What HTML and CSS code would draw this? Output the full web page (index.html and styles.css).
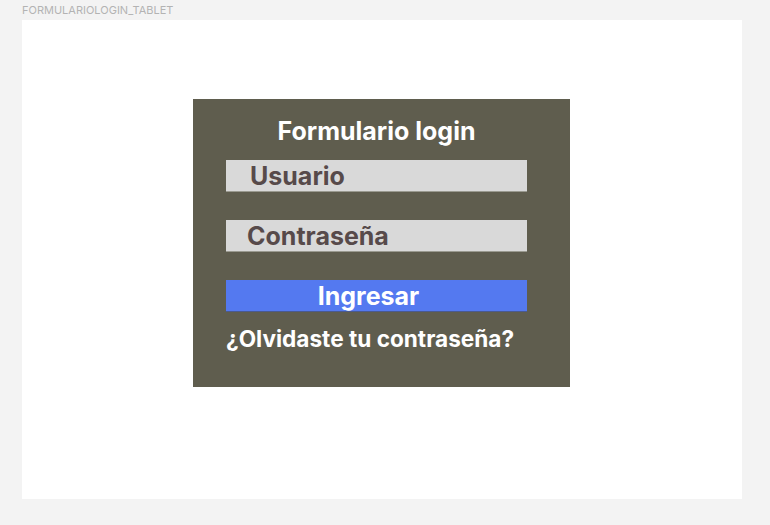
FILE: index.html
```html
<!DOCTYPE html>
<html lang="es">
<head>
<meta charset="utf-8">
<title>FormularioLogin_Tablet</title>
<link rel="stylesheet" href="styles.css">
</head>
<body>
<div class="frame-label">FORMULARIOLOGIN_TABLET</div>
<div class="frame">
  <form class="login">
    <h1 class="title">Formulario login</h1>
    <div class="field field-user">Usuario</div>
    <div class="field field-pass">Contraseña</div>
    <div class="btn">Ingresar</div>
    <a class="forgot">¿Olvidaste tu contraseña?</a>
  </form>
</div>
</body>
</html>
```
FILE: styles.css
```css
* { box-sizing: border-box; }
html, body { margin: 0; padding: 0; }
body {
  background: #f3f3f3;
  font-family: Inter, "Noto Sans", sans-serif;
  width: 770px;
  height: 525px;
  overflow: hidden;
}
.frame-label {
  height: 20px;
  padding: 4px 0 0 22px;
  font-size: 11px;
  line-height: 13px;
  color: #b3b3b3;
}
.frame {
  margin-left: 22px;
  width: 720px;
  height: 479px;
  background: #ffffff;
  padding: 79px 0 0 171px;
}
.login {
  width: 377px;
  height: 288px;
  background: #5f5d4e;
  margin: 0;
  padding: 17px 43px 0 33px;
  display: flex;
  flex-direction: column;
}
.title {
  margin: 0;
  font-size: 25px;
  line-height: 30px;
  font-weight: 700;
  color: #ffffff;
  text-align: center;
}
.field {
  height: 32px;
  background: #d9d9d9;
  border-bottom: 1px solid #9a9a90;
  color: #574a4a;
  font-weight: 700;
  font-size: 25px;
  line-height: 33px;
}
.field-user { margin-top: 14px; padding-left: 24px; }
.field-pass { margin-top: 28px; padding-left: 21px; }
.btn {
  margin-top: 28px;
  height: 32px;
  background: #5479f0;
  border-bottom: 1px solid #4a5a90;
  color: #ffffff;
  font-weight: 700;
  font-size: 25px;
  line-height: 33px;
  text-align: center;
  padding-right: 16px;
}
.forgot {
  margin-top: 13px;
  color: #ffffff;
  font-weight: 700;
  font-size: 22.6px;
  line-height: 28px;
  text-decoration: none;
  white-space: nowrap;
}
```
